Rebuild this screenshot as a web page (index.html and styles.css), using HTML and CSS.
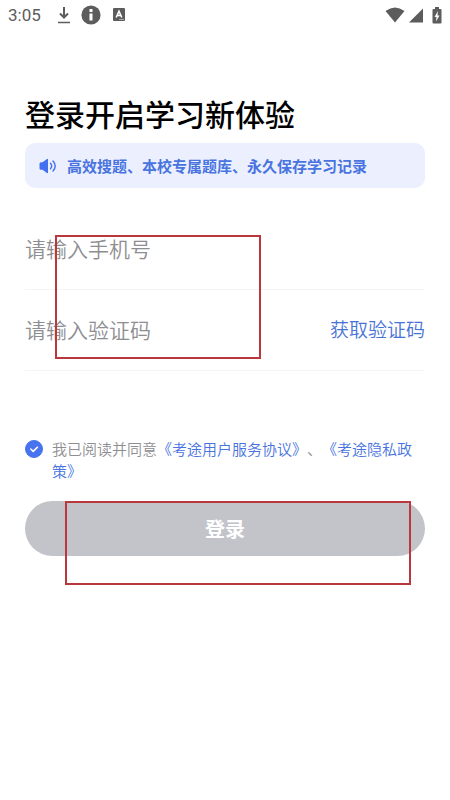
FILE: index.html
```html
<!DOCTYPE html>
<html lang="zh-CN">
<head>
<meta charset="utf-8">
<meta name="viewport" content="width=device-width, initial-scale=1">
<title>登录</title>
<link rel="stylesheet" href="styles.css">
</head>
<body>
<header class="status">
  <div class="status-left">
    <span class="clock">3:05</span>
    <svg width="14" height="18" viewBox="0 0 14 18" aria-hidden="true"><path d="M7 1v10M3 7.500l4 4 4-4" fill="none" stroke="#5c5c5c" stroke-width="2"/><path d="M1 16.500h12" stroke="#5c5c5c" stroke-width="1.500"/></svg>
    <svg width="20" height="20" viewBox="0 0 20 20" aria-hidden="true"><circle cx="10" cy="10" r="9.600" fill="#5c5c5c"/><path d="M10 4v3M10 8.500v7" fill="none" stroke="#fff" stroke-width="3"/></svg>
    <svg class="app-icon" width="12" height="14" viewBox="0 0 12 14" aria-hidden="true"><rect width="12" height="13" rx="1" fill="#5c5c5c"/><path d="M3.200 9.500L6 3.200l2.800 6.300M4.200 7.500h3.600" fill="none" stroke="#fff" stroke-width="1.600"/><path d="M6 11.500h5" stroke="#aaa" stroke-width="1"/></svg>
  </div>
  <div class="status-right">
    <svg width="20" height="16" viewBox="0 0 20 16" aria-hidden="true"><path d="M0.500 4Q10-3 19.500 4L10 15.500z" fill="#5c5c5c"/></svg>
    <svg width="14" height="15" viewBox="0 0 14 15" aria-hidden="true"><path d="M14 0.500V14.500H0z" fill="#5c5c5c"/></svg>
    <svg class="battery" width="10" height="17" viewBox="0 0 10 17" aria-hidden="true"><path d="M3 0h4v2h1.500Q9.500 2 9.500 3v12.500q0 1-1 1h-7q-1 0-1-1V3Q.5 2 1.500 2H3z" fill="#5c5c5c"/><path d="M6 4L2.500 10h2L4 14.500 7.500 8.500h-2z" fill="#fff"/></svg>
  </div>
</header>
<main class="login">
  <h1 class="title">登录开启学习新体验</h1>
  <p class="notice">
    <svg width="18" height="16" viewBox="0 0 18 16" aria-hidden="true"><path d="M2 4.200h1.500L7.600 1.200q1.400-.9 1.400.6v12.400q0 1.500-1.400.6L3.500 11.800H2Q.5 11.800.5 10.300V5.700Q.5 4.200 2 4.200z" fill="#4270ee"/><path d="M11.500 5.300q2.400 2.700 0 5.400M14 3q4.400 5 0 10" fill="none" stroke="#4270ee" stroke-width="1.400" stroke-linecap="round"/></svg>
    <span>高效搜题、本校专属题库、永久保存学习记录</span>
  </p>
  <form class="form">
    <div class="field"><input class="input" type="tel" placeholder="请输入手机号" aria-label="手机号"></div>
    <div class="field">
      <input class="input" type="text" placeholder="请输入验证码" aria-label="验证码">
      <button class="code" type="button">获取验证码</button>
    </div>
    <div class="agreement">
      <input class="check" type="checkbox" id="agree" checked>
      <svg class="tick" width="18" height="18" viewBox="0 0 18 18" aria-hidden="true"><path d="M5.800 9l2.400 2.400 4.200-4.200" fill="none" stroke="#fff" stroke-width="1.600" stroke-linecap="round" stroke-linejoin="round"/></svg>
      <label for="agree">我已阅读并同意<a href="#terms">《考途用户服务协议》</a>、<a href="#privacy">《考途隐私政策》</a></label>
    </div>
    <button class="submit" type="submit">登录</button>
  </form>
  <div class="mark mark-fields"></div>
  <div class="mark mark-submit"></div>
</main>
</body>
</html>
```
FILE: styles.css
```css
* { box-sizing: border-box; }

body {
  display: flex;
  flex-direction: column;
  min-height: 100vh;
  margin: 0;
  background: #fff;
  color: #000;
  font-family: "Noto Sans CJK SC", sans-serif;
  text-spacing-trim: space-all;
}

.status {
  display: flex;
  justify-content: space-between;
  align-items: center;
  height: 30px;
  padding: 0 8px;
}

.status-left,
.status-right { display: flex; align-items: center; }
.status-left { gap: 10px; }
.status-right { gap: 4px; }
.app-icon { margin-left: 2px; }
.battery { margin-left: 5px; }

.clock {
  margin-right: 6px;
  color: #5c5c5c;
  font: 17px/30px Roboto, sans-serif;
}

.login {
  position: relative;
  flex: 1;
  padding: 61px 25px 32px;
}

.title {
  margin: 0;
  font-size: 30px;
  font-weight: 500;
  line-height: 44px;
}

.notice {
  display: flex;
  align-items: center;
  gap: 10px;
  height: 45px;
  margin: 8px 0 21px;
  padding: 0 14px;
  border-radius: 10px;
  background: #ecf0fe;
  color: #4873e0;
  font-size: 15px;
  font-weight: 700;
}

.field {
  display: flex;
  align-items: center;
  height: 81px;
  padding-bottom: 2px;
  border-bottom: 1px solid #f4f4f5;
}

.input {
  flex: 1;
  min-width: 0;
  padding: 0;
  border: 0;
  outline: 0;
  background: none;
  color: #222;
  font: 350 21px/32px "Noto Sans CJK SC", sans-serif;
}

.input::placeholder { color: #8e8e92; opacity: 1; }

.code {
  padding: 0;
  border: 0;
  background: none;
  color: #4873d6;
  font: 350 19px/32px "Noto Sans CJK SC", sans-serif;
}

.agreement {
  position: relative;
  display: flex;
  align-items: flex-start;
  gap: 9px;
  margin: 67px 0 19px;
  color: #8e8e92;
  font-size: 15px;
  font-weight: 350;
  line-height: 22px;
}

.agreement a { color: #4873e0; text-decoration: none; }

.check {
  flex: none;
  appearance: none;
  width: 18px;
  height: 18px;
  margin: 2px 0 0;
  border: 1px solid #4873ee;
  border-radius: 50%;
}

.check:checked { background: #4873ee; }

.tick {
  position: absolute;
  top: 2px;
  left: 0;
  pointer-events: none;
}

.submit {
  width: 100%;
  height: 55px;
  padding: 0;
  border: 0;
  border-radius: 28px;
  background: #c3c4ca;
  color: #fff;
  font: 700 20px/30px "Noto Sans CJK SC", sans-serif;
}

.mark {
  position: absolute;
  border: 2px solid #b9383e;
  pointer-events: none;
}

.mark-fields { top: 205px; left: 55px; width: 206px; height: 124px; }
.mark-submit { top: 471px; left: 65px; right: 39px; height: 84px; }
```
